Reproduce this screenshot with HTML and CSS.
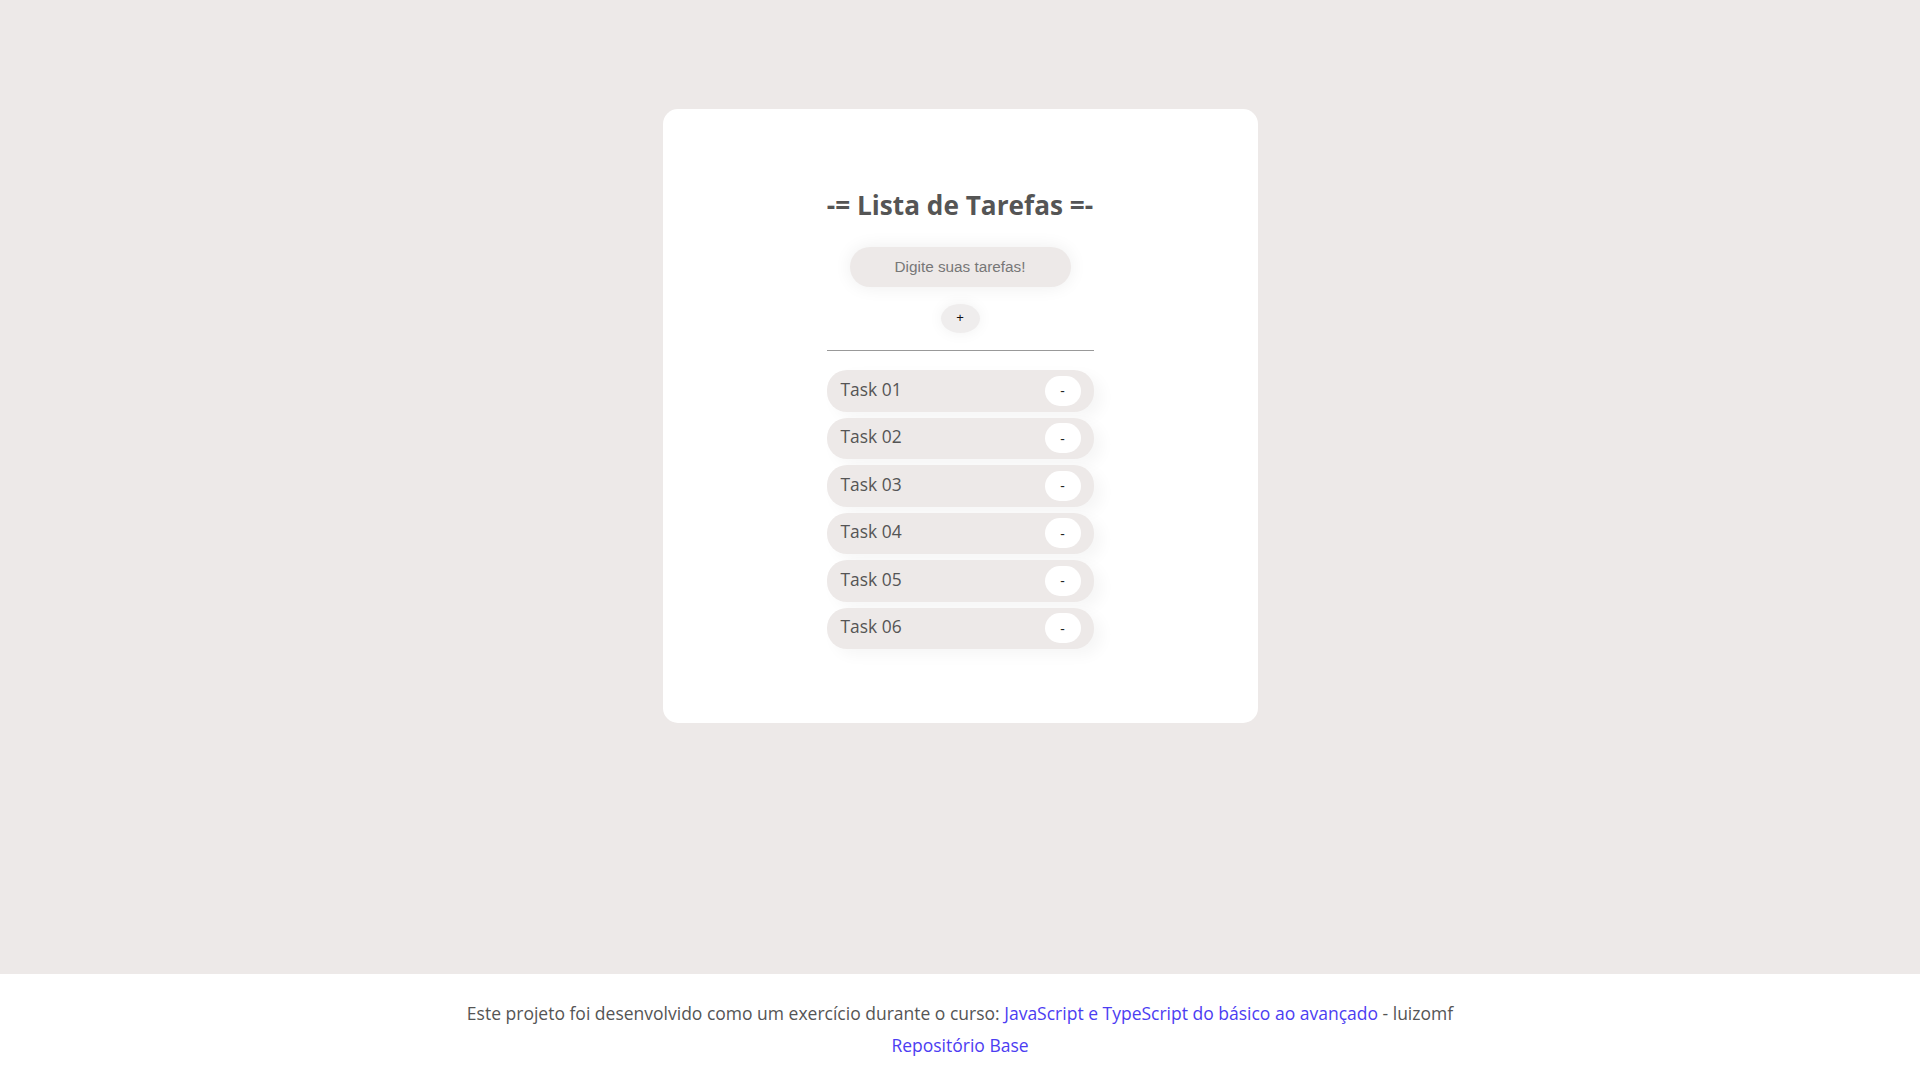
FILE: index.html
```html
<!DOCTYPE html>
<html lang="pt-BR">
<head>
<meta charset="utf-8">
<title>Lista de Tarefas</title>
<link rel="stylesheet" href="styles.css">
</head>
<body>
<main class="main">
  <section class="card">
    <h1 class="title">-= Lista de Tarefas =-</h1>
    <input class="task-input" type="text" placeholder="Digite suas tarefas!">
    <button class="add-btn">+</button>
    <hr class="divider">
    <ul class="tasks">
      <li class="task"><span class="task-name">Task 01</span><button class="remove-btn">-</button></li>
      <li class="task"><span class="task-name">Task 02</span><button class="remove-btn">-</button></li>
      <li class="task"><span class="task-name">Task 03</span><button class="remove-btn">-</button></li>
      <li class="task"><span class="task-name">Task 04</span><button class="remove-btn">-</button></li>
      <li class="task"><span class="task-name">Task 05</span><button class="remove-btn">-</button></li>
      <li class="task"><span class="task-name">Task 06</span><button class="remove-btn">-</button></li>
    </ul>
  </section>
</main>
<footer class="footer">
  <p class="footer-line">Este projeto foi desenvolvido como um exercício durante o curso: <a class="link" href="#">JavaScript e TypeScript do básico ao avançado</a> - luizomf</p>
  <p class="footer-line"><a class="link" href="#">Repositório Base</a></p>
</footer>
</body>
</html>
```
FILE: styles.css
```css
* { box-sizing: border-box; }

html, body {
  margin: 0;
  padding: 0;
}

body {
  background: #ede9e8;
  font-family: "Open Sans", "Liberation Sans", sans-serif;
  color: #555;
}

.main {
  height: 974px;
  display: flex;
  justify-content: center;
  align-items: flex-start;
  padding-top: 109px;
}

.card {
  width: 595px;
  height: 614px;
  background: #fff;
  border-radius: 15px;
  padding: 78px 0 0;
  display: flex;
  flex-direction: column;
  align-items: center;
}

.title {
  margin: 0;
  font-size: 26.2px;
  font-weight: 700;
  line-height: 37px;
  color: #555;
}

.task-input {
  margin-top: 23px;
  width: 221px;
  height: 40px;
  border: none;
  outline: none;
  border-radius: 20px;
  background: #ede9e8;
  box-shadow: 0 0 18px rgba(0, 0, 0, 0.07);
  font-family: "Liberation Sans", Arial, sans-serif;
  font-size: 15.3px;
  text-align: center;
  color: #555;
}

.task-input::placeholder {
  color: #777;
}

.add-btn {
  margin-top: 17px;
  width: 39px;
  height: 29px;
  border: none;
  border-radius: 50%;
  background: #efeded;
  box-shadow: 0 0 15px rgba(0, 0, 0, 0.06);
  font-family: "Liberation Sans", Arial, sans-serif;
  font-size: 13px;
  color: #111;
  padding: 0 0 2px;
}

.divider {
  margin: 17px 0 0;
  width: 267px;
  border: none;
  border-top: 1.5px solid #999;
  height: 0;
}

.tasks {
  list-style: none;
  margin: 19px 0 0;
  padding: 0;
  width: 267px;
  display: flex;
  flex-direction: column;
  gap: 6px;
}

.task {
  height: 41.5px;
  border-radius: 20px;
  background: #ede9e8;
  box-shadow: 8px 6px 15px rgba(0, 0, 0, 0.04);
  display: flex;
  align-items: center;
  justify-content: space-between;
  padding: 0 13px 0 14px;
}

.task-name {
  font-size: 17.4px;
  color: #555;
  margin-top: -4px;
}

.remove-btn {
  width: 36px;
  height: 30px;
  border: none;
  border-radius: 15px;
  background: #fff;
  font-family: "Open Sans", sans-serif;
  font-size: 14px;
  color: #222;
  padding: 0;
}

.footer {
  height: 106px;
  background: #fff;
  padding-top: 23px;
  text-align: center;
}

.footer-line {
  margin: 0;
  font-size: 17.5px;
  line-height: 32px;
  color: #555;
}

.link {
  color: #4c3df2;
  text-decoration: none;
}
```
